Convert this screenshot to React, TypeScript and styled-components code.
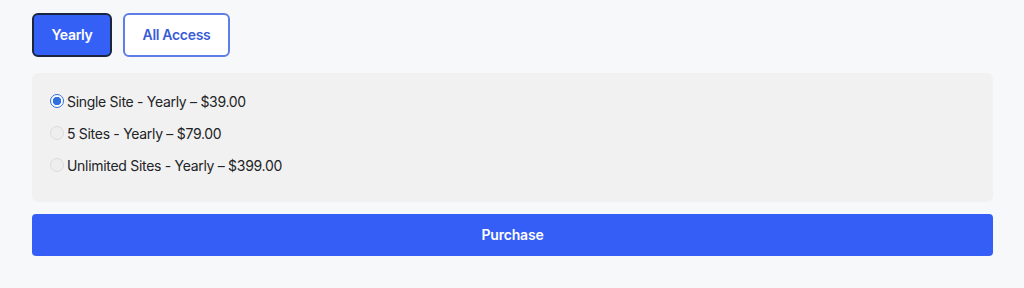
import React, { useState } from "react";
import styled, { createGlobalStyle } from "styled-components";

const Global = createGlobalStyle`
  html, body {
    margin: 0;
    background: #f7f8fa;
    font-family: Inter, "Noto Sans", sans-serif;
  }
`;

const Page = styled.div`
  width: 961px;
  padding: 13px 0 0 32px;
`;

const Tabs = styled.div`
  display: flex;
  gap: 11px;
`;

const Tab = styled.button<{ $active?: boolean; $width: number }>`
  width: ${(p) => p.$width}px;
  height: 44px;
  padding: 0 0 2px;
  border-radius: 6px;
  font-family: inherit;
  font-size: 14px;
  font-weight: 600;
  letter-spacing: -0.3px;
  cursor: pointer;
  background: ${(p) => (p.$active ? "#3560f5" : "#ffffff")};
  color: ${(p) => (p.$active ? "#ffffff" : "#3a5bd8")};
  border: ${(p) => (p.$active ? "2px solid #1c2540" : "2px solid #5f7de6")};
`;

const Options = styled.div`
  margin-top: 16px;
  background: #f1f1f1;
  border-radius: 6px;
  padding: 18px 18px 27px;
  display: flex;
  flex-direction: column;
  gap: 12px;
`;

const Option = styled.label`
  display: flex;
  align-items: center;
  gap: 3px;
  height: 20px;
  font-size: 14px;
  letter-spacing: -0.3px;
  color: #222326;
  cursor: pointer;
`;

const Radio = styled.span<{ $checked?: boolean }>`
  width: 14px;
  height: 14px;
  border-radius: 50%;
  box-sizing: border-box;
  border: 1px solid ${(p) => (p.$checked ? "#2f6fde" : "#dcdcdc")};
  background: ${(p) =>
    p.$checked
      ? "radial-gradient(circle, #2f6fde 0 4px, #ffffff 4.5px)"
      : "#eeeeee"};
`;

const Purchase = styled.button`
  margin-top: 12px;
  width: 100%;
  height: 42px;
  padding: 0 0 1px;
  border: none;
  border-radius: 4px;
  background: #355ef7;
  color: #ffffff;
  font-family: inherit;
  font-size: 14px;
  font-weight: 600;
  letter-spacing: -0.2px;
  cursor: pointer;
`;

const plans = [
  "Single Site - Yearly – $39.00",
  "5 Sites - Yearly – $79.00",
  "Unlimited Sites - Yearly – $399.00",
];

const tabs = [
  { label: "Yearly", width: 80 },
  { label: "All Access", width: 107 },
];

export default function App() {
  const [tab, setTab] = useState(0);
  const [plan, setPlan] = useState(0);
  return (
    <>
      <Global />
      <Page>
        <Tabs>
          {tabs.map((t, i) => (
            <Tab
              key={t.label}
              $width={t.width}
              $active={tab === i}
              onClick={() => setTab(i)}
            >
              {t.label}
            </Tab>
          ))}
        </Tabs>
        <Options>
          {plans.map((p, i) => (
            <Option key={p} onClick={() => setPlan(i)}>
              <Radio $checked={plan === i} />
              {p}
            </Option>
          ))}
        </Options>
        <Purchase>Purchase</Purchase>
      </Page>
    </>
  );
}
